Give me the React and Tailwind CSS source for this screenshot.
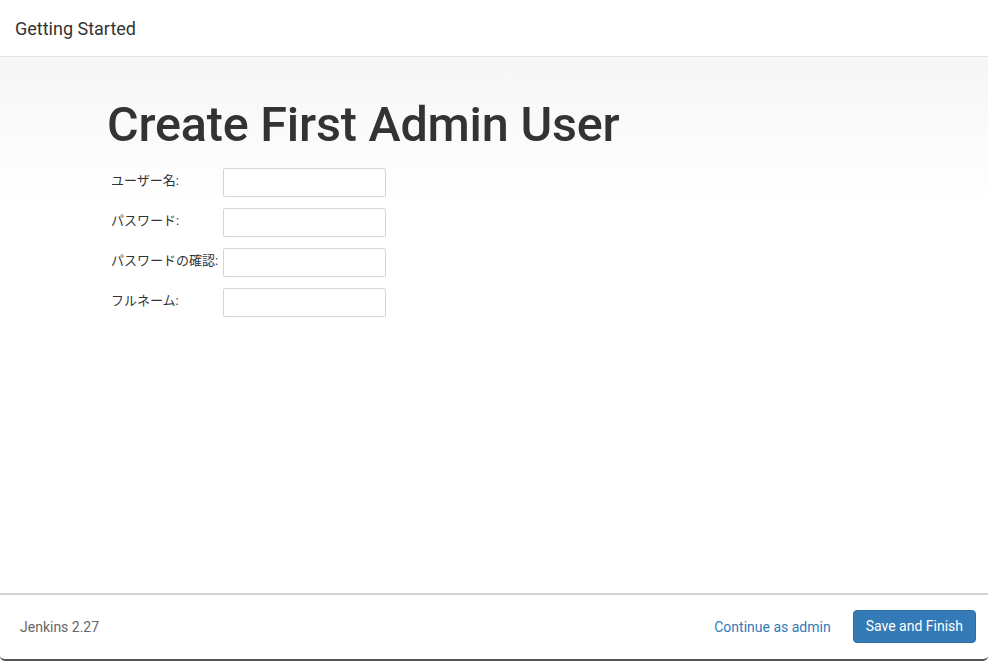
import React from 'react';

const fields = ['ユーザー名:', 'パスワード:', 'パスワードの確認:', 'フルネーム:'];

export default function App() {
  return (
    <div
      className="h-[663px] w-[988px] overflow-hidden bg-white"
      style={{ fontFamily: 'Roboto, "Noto Sans CJK JP", sans-serif' }}
    >
      <div className="flex h-[661px] flex-col rounded-b-[5px] border-b-2 border-[#555] bg-white">
        {/* Header */}
        <header className="flex h-[57px] shrink-0 items-center border-b border-[#e3e3e3] px-[15px]">
          <h4 className="text-[18px] font-normal text-[#333]">Getting Started</h4>
        </header>

        {/* Body */}
        <main className="flex-1 bg-gradient-to-b from-[#f6f6f6] via-white via-[28%] to-white pl-[107px] pt-[39px]">
          <h1 className="text-[48.5px] leading-[58px] font-medium tracking-[-0.2px] text-[#333]">
            Create First Admin User
          </h1>
          <div className="mt-[14px] flex flex-col gap-[11px]">
            {fields.map((label) => (
              <div key={label} className="flex items-center">
                <label className="w-[116px] pb-[4px] pl-[4px] text-[13px] text-[#333]">{label}</label>
                <input
                  type={label.startsWith('パスワード') ? 'password' : 'text'}
                  className="h-[29px] w-[163px] rounded-[2px] border border-[#d5d5d5] bg-white"
                />
              </div>
            ))}
          </div>
        </main>

        {/* Footer */}
        <footer className="flex h-[66px] shrink-0 items-center border-t-2 border-[#d4d4d4] pl-[20px] pr-[12px]">
          <span className="text-[14px] text-[#666]">Jenkins 2.27</span>
          <div className="ml-auto flex items-center gap-[22px]">
            <a className="text-[14px] text-[#337ab7]">Continue as admin</a>
            <button className="mb-[1px] h-[33px] rounded-[4px] border border-[#2e6da4] bg-[#337ab7] px-[12px] text-[14px] text-white">
              Save and Finish
            </button>
          </div>
        </footer>
      </div>
    </div>
  );
}
